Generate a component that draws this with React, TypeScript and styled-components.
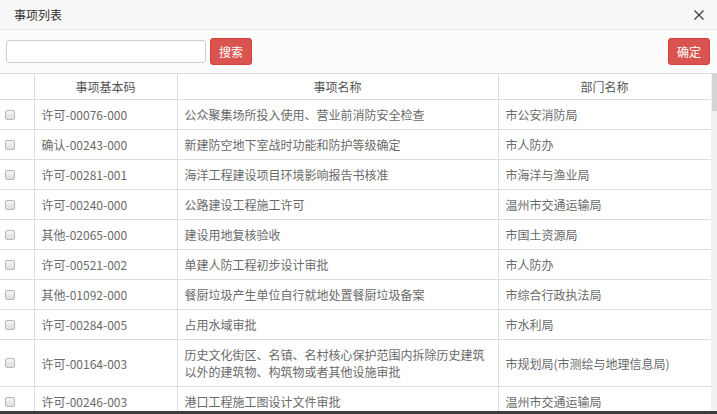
import styled, { createGlobalStyle } from 'styled-components';

const GlobalStyle = createGlobalStyle`
  html, body {
    margin: 0;
    padding: 0;
    background: #fff;
  }
  body {
    font-family: "Noto Sans CJK SC", "Noto Sans", sans-serif;
    font-size: 12px;
    color: #6a6a6a;
  }
`;

const Modal = styled.div`
  width: 717px;
  height: 414px;
  display: flex;
  flex-direction: column;
  overflow: hidden;
  background: #fff;
`;

const Header = styled.div`
  height: 29px;
  flex: none;
  display: flex;
  align-items: center;
  justify-content: space-between;
  padding: 0 13px 0 14px;
  background: #f7f7f7;
  border-bottom: 1px solid #e5e5e5;
`;

const Title = styled.span`
  font-size: 12px;
  color: #333;
`;

const Close = styled.svg`
  width: 10px;
  height: 10px;
  display: block;
  margin-top: 1px;
`;

const Toolbar = styled.div`
  height: 44px;
  flex: none;
  display: flex;
  align-items: center;
  padding: 0 7px 0 6px;
  gap: 4px;
  background: #fcfcfc;
  border-bottom: 1px solid #ddd;
  box-sizing: border-box;
`;

const SearchInput = styled.input`
  width: 200px;
  height: 23px;
  box-sizing: border-box;
  border: 1px solid #ccc;
  border-radius: 3px;
  padding: 0 6px;
  font: inherit;
  outline: none;
`;

const Button = styled.button<{ $push?: boolean }>`
  height: 27px;
  width: 42px;
  padding: 0;
  border: 1px solid #d43f3a;
  border-radius: 3px;
  background: #d9534f;
  color: #fff;
  font-family: inherit;
  font-size: 12px;
  margin-left: ${({ $push }) => ($push ? 'auto' : '0')};
`;

const Body = styled.div`
  flex: 1;
  display: flex;
  min-height: 0;
  overflow: hidden;
`;

const TableWrap = styled.div`
  width: 711px;
  flex: none;
`;

const Table = styled.table`
  width: 711px;
  border-collapse: collapse;
  table-layout: fixed;
`;

const Th = styled.th`
  font-weight: normal;
  color: #555;
  text-align: center;
  line-height: 17px;
  padding: 4px 8px;
  border: 1px solid #ddd;
  border-top: none;
  &:first-child {
    border-left: none;
  }
`;

const Td = styled.td`
  line-height: 17px;
  padding: 6px 7px;
  border: 1px solid #ddd;
  vertical-align: middle;
  &:first-child {
    border-left: none;
    padding: 0 0 0 5px;
  }
`;

const Check = styled.span`
  display: block;
  width: 8px;
  height: 8px;
  border: 1px solid #b8b8b8;
  border-radius: 2px;
  background: linear-gradient(#f4f4f4, #dedede);
`;

const Track = styled.div`
  width: 6px;
  flex: none;
  background: #f1f1f1;
`;

const Thumb = styled.div`
  height: 37px;
  margin-left: 1px;
  background: #d4d4d4;
`;

const Footer = styled.div`
  height: 3px;
  flex: none;
  background: #3d3d3d;
`;

const rows: [string, string, string][] = [
  ['许可-00076-000', '公众聚集场所投入使用、营业前消防安全检查', '市公安消防局'],
  ['确认-00243-000', '新建防空地下室战时功能和防护等级确定', '市人防办'],
  ['许可-00281-001', '海洋工程建设项目环境影响报告书核准', '市海洋与渔业局'],
  ['许可-00240-000', '公路建设工程施工许可', '温州市交通运输局'],
  ['其他-02065-000', '建设用地复核验收', '市国土资源局'],
  ['许可-00521-002', '单建人防工程初步设计审批', '市人防办'],
  ['其他-01092-000', '餐厨垃圾产生单位自行就地处置餐厨垃圾备案', '市综合行政执法局'],
  ['许可-00284-005', '占用水域审批', '市水利局'],
  [
    '许可-00164-003',
    '历史文化街区、名镇、名村核心保护范围内拆除历史建筑以外的建筑物、构筑物或者其他设施审批',
    '市规划局(市测绘与地理信息局)',
  ],
  ['许可-00246-003', '港口工程施工图设计文件审批', '温州市交通运输局'],
];

const App = () => (
  <>
    <GlobalStyle />
    <Modal>
      <Header>
        <Title>事项列表</Title>
        <Close viewBox="0 0 10 10">
          <path d="M0.5 0.5 L9.5 9.5 M9.5 0.5 L0.5 9.5" stroke="#444" strokeWidth="1.4" />
        </Close>
      </Header>
      <Toolbar>
        <SearchInput />
        <Button>搜索</Button>
        <Button $push>确定</Button>
      </Toolbar>
      <Body>
        <TableWrap>
          <Table>
            <colgroup>
              <col style={{ width: 34 }} />
              <col style={{ width: 143 }} />
              <col style={{ width: 321 }} />
              <col style={{ width: 213 }} />
            </colgroup>
            <thead>
              <tr>
                <Th />
                <Th>事项基本码</Th>
                <Th>事项名称</Th>
                <Th>部门名称</Th>
              </tr>
            </thead>
            <tbody>
              {rows.map(([code, name, dept]) => (
                <tr key={code}>
                  <Td>
                    <Check />
                  </Td>
                  <Td>{code}</Td>
                  <Td>{name}</Td>
                  <Td>{dept}</Td>
                </tr>
              ))}
            </tbody>
          </Table>
        </TableWrap>
        <Track>
          <Thumb />
        </Track>
      </Body>
      <Footer />
    </Modal>
  </>
);

export default App;
